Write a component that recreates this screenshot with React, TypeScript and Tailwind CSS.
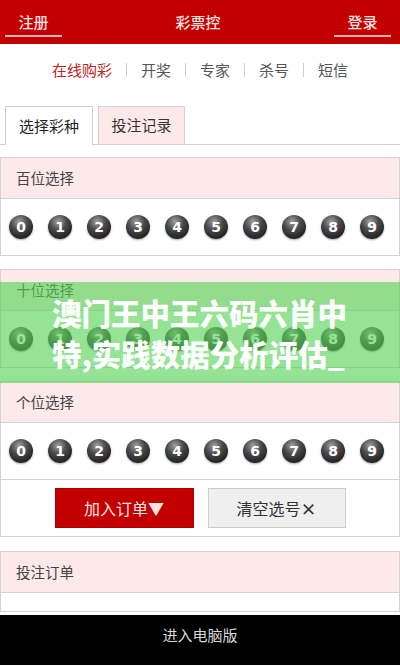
const font = { fontFamily: '"Noto Sans CJK SC", "Noto Sans", sans-serif' };

function Ball({ n }: { n: number }) {
  return (
    <div className="w-[24px] h-[24px] rounded-full flex items-center justify-center shadow-[0_1px_2px_rgba(0,0,0,0.35)] bg-[radial-gradient(circle_at_42%_28%,#a0a0a0_0%,#4a4a4a_38%,#262626_72%,#0e0e0e_100%)]">
      <span
        className="text-white text-[14px] font-bold leading-none"
        style={{ fontFamily: '"DejaVu Sans", Verdana, sans-serif' }}
      >
        {n}
      </span>
    </div>
  );
}

function BallRow() {
  return (
    <div className="h-[57px] flex items-center pl-[8px] gap-[15px] border-b border-[#d2d2d2]">
      {[0, 1, 2, 3, 4, 5, 6, 7, 8, 9].map((n) => (
        <Ball key={n} n={n} />
      ))}
    </div>
  );
}

function Head({ title }: { title: string }) {
  return (
    <div className="h-[41px] bg-[#fde9e9] border-b border-[#d2d2d2] flex items-center pl-[15px] text-[14.5px] text-[#444]">
      {title}
    </div>
  );
}

export default function App() {
  const nav = ["开奖", "专家", "杀号", "短信"];
  return (
    <div className="relative w-[400px] h-[666px] overflow-hidden bg-white" style={font}>
      {/* HEADER */}
      <header className="h-[44px] bg-[#c30000] flex items-start justify-between text-[#fbe2e2] text-[15px] font-medium">
        <div className="ml-[5px] mt-[12px] w-[57px] text-center leading-[20px] pb-[3px] border-b-2 border-[#f4b4b4]">
          注册
        </div>
        <div className="mt-[12px] leading-[20px]">彩票控</div>
        <div className="mr-[9px] mt-[12px] w-[57px] text-center leading-[20px] pb-[3px] border-b-2 border-[#f4b4b4]">
          登录
        </div>
      </header>

      {/* NAV */}
      <nav className="h-[52px] flex items-center justify-center gap-[14px] text-[15px] text-[#555]">
        <span className="text-[#c02222]">在线购彩</span>
        {nav.map((t) => (
          <div key={t} className="flex items-center gap-[14px]">
            <span className="w-px h-[14px] bg-[#cfcfcf]"></span>
            <span>{t}</span>
          </div>
        ))}
      </nav>

      {/* TABS */}
      <div className="mt-[10px] h-[39px] flex items-end gap-[5px] pl-[5px] border-b border-[#cfcfcf]">
        <div className="w-[88px] h-[39px] -mb-px bg-white border border-b-0 border-[#cfcfcf] flex items-center justify-center text-[15px] text-[#222]">
          选择彩种
        </div>
        <div className="w-[87px] h-[38px] bg-[#fde9e9] border border-b-0 border-[#d8d0d0] flex items-center justify-center text-[15px] text-[#333]">
          投注记录
        </div>
      </div>

      {/* SECTIONS */}
      <section className="mt-[12px] border border-b-0 border-[#d2d2d2]">
        <Head title="百位选择" />
        <BallRow />
      </section>

      <section className="mt-[13px] border border-b-0 border-[#d2d2d2]">
        <Head title="十位选择" />
        <BallRow />
      </section>

      <section className="mt-[13px] border border-b-0 border-[#d2d2d2]">
        <Head title="个位选择" />
        <BallRow />
        <div className="h-[57px] flex items-center justify-center gap-[14px] border-b border-[#d2d2d2]">
          <button className="w-[139px] h-[40px] bg-[#c30000] border border-[#a80000] text-[#fde2e2] text-[16px]">
            加入订单▼
          </button>
          <button className="w-[138px] h-[40px] bg-[#efefef] border border-[#cdcdcd] text-[#333] text-[16px]">
            清空选号<span className="font-bold">×</span>
          </button>
        </div>
      </section>

      <section className="mt-[14px] border border-b-0 border-[#d2d2d2]">
        <Head title="投注订单" />
        <div className="h-[19px] border-b border-[#d2d2d2]"></div>
      </section>

      {/* FOOTER */}
      <footer className="mt-[3px] h-[50px] bg-black flex justify-center pt-[10px]">
        <span className="text-[15px] leading-[20px] text-[#d8d8d8]">进入电脑版</span>
      </footer>

      {/* OVERLAY */}
      <div className="absolute left-0 right-0 top-[282px] h-[101px] bg-[rgba(84,212,84,0.62)] flex items-center">
        <p className="ml-[52px] w-[302px] text-white font-black text-[29.5px] leading-[41px]">
          澳门王中王六码六肖中特,实践数据分析评估_
        </p>
      </div>
    </div>
  );
}
